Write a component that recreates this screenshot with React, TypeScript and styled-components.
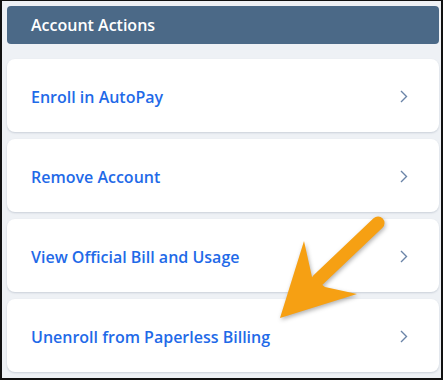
import React from 'react'
import styled, { createGlobalStyle } from 'styled-components'

const GlobalStyle = createGlobalStyle`
  html, body {
    margin: 0;
    padding: 0;
    background: #ffffff;
  }
  * { box-sizing: border-box; }
`

const Frame = styled.div`
  position: relative;
  width: 443px;
  height: 380px;
  border: 2px solid #111111;
  border-top-width: 1px;
  background-color: #eef1f5;
  padding: 5px 2px 0 5px;
  font-family: "Open Sans", "Noto Sans", sans-serif;
  overflow: hidden;
`

const Header = styled.div`
  height: 38px;
  display: flex;
  align-items: center;
  padding-left: 24px;
  background-color: #4b6987;
  border-radius: 4px;
  color: #ffffff;
  font-size: 16px;
  font-weight: 600;
`

const List = styled.div`
  display: flex;
  flex-direction: column;
  gap: 7px;
  margin-top: 15px;
`

const Card = styled.div`
  height: 73px;
  display: flex;
  align-items: center;
  justify-content: space-between;
  padding: 0 31px 0 24px;
  background-color: #ffffff;
  border-radius: 8px;
  box-shadow: 0 1px 2px rgba(40, 60, 90, 0.18);
  cursor: pointer;
`

const Label = styled.span`
  color: #1f6ae8;
  font-size: 16px;
  font-weight: 600;
  margin-top: 2px;
`

const Chevron = styled.svg`
  width: 8px;
  height: 13px;
  margin-top: 1px;
`

const Arrow = styled.svg`
  position: absolute;
  left: 0;
  top: 0;
  width: 443px;
  height: 380px;
  pointer-events: none;
  filter: drop-shadow(1px 2px 2px rgba(0, 0, 0, 0.3));
`

const actions = [
  'Enroll in AutoPay',
  'Remove Account',
  'View Official Bill and Usage',
  'Unenroll from Paperless Billing',
]

const App: React.FC = () => {
  return (<>
    <GlobalStyle />
    <Frame>
      <Header>Account Actions</Header>
      <List>
        {actions.map(a => (
          <Card key={a}>
            <Label>{a}</Label>
            <Chevron viewBox="0 0 8 13">
              <polyline points="1,1 6.5,6.5 1,12" fill="none" stroke="#6a84a8" strokeWidth="1.4" />
            </Chevron>
          </Card>
        ))}
      </List>
      <Arrow viewBox="0 0 443 380">
        <line x1="376" y1="222" x2="316" y2="279" stroke="#f6a013" strokeWidth="13" strokeLinecap="round" />
        <polygon points="302,240 310,276 323,286 355,293 278,317" fill="#f6a013" />
      </Arrow>
    </Frame>
  </>)
}

export { App as default }
